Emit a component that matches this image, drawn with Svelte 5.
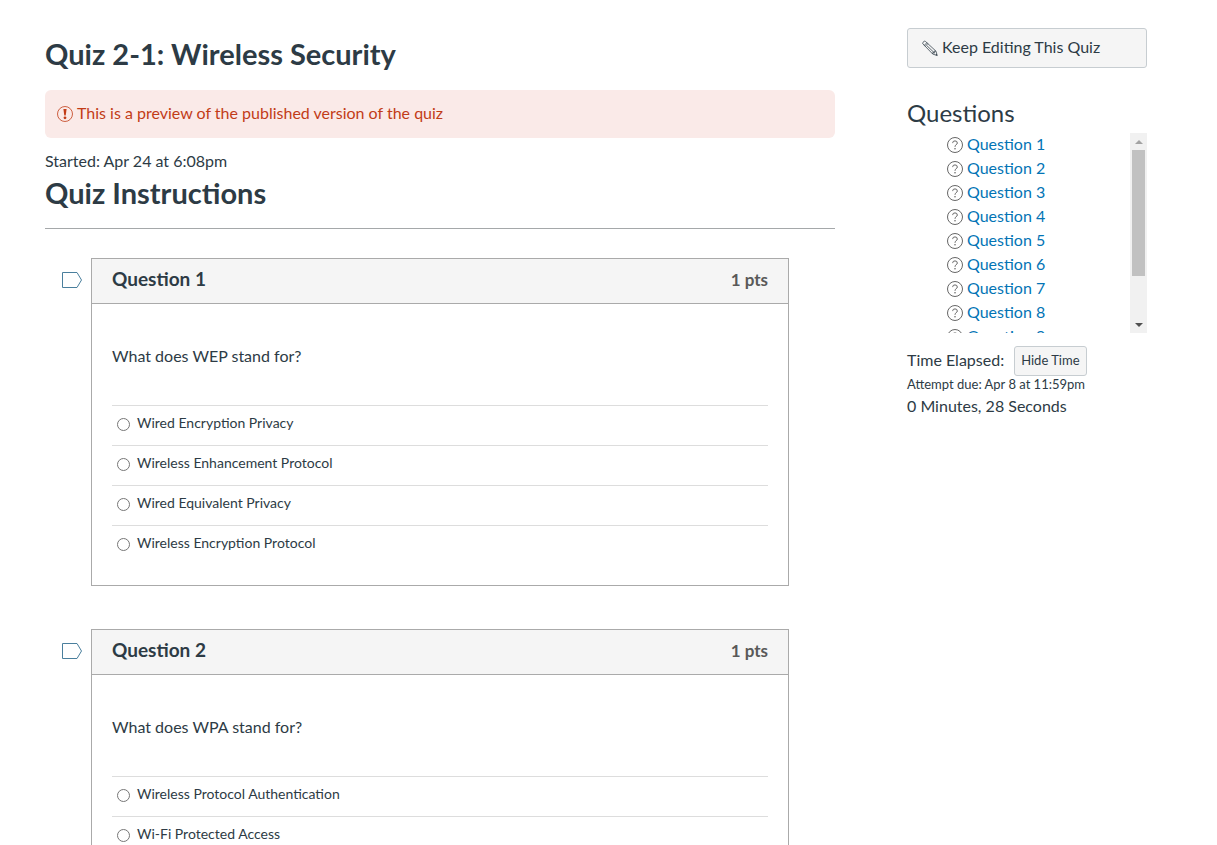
<script>
  const questions = [
    {
      id: 1,
      prompt: 'What does WEP stand for?',
      answers: [
        'Wired Encryption Privacy',
        'Wireless Enhancement Protocol',
        'Wired Equivalent Privacy',
        'Wireless Encryption Protocol'
      ]
    },
    {
      id: 2,
      prompt: 'What does WPA stand for?',
      answers: ['Wireless Protocol Authentication', 'Wi-Fi Protected Access']
    }
  ];
  const total = 10;

  let picked = $state({});
  let flagged = $state({});
  let timeShown = $state(true);
  let list = $state();
  let thumb = $state({ top: 0, height: 76 });

  function measure() {
    if (!list) return;
    thumb = {
      top: (list.scrollTop / list.scrollHeight) * 100,
      height: (list.clientHeight / list.scrollHeight) * 100
    };
  }

  function scrollList(step) {
    list.scrollTop += step;
  }

  $effect(measure);
</script>

<div class="page">
  <main>
    <h1>Quiz 2-1: Wireless Security</h1>
    <div class="alert" role="alert">
      <svg width="16" height="16" viewBox="0 0 16 16" aria-hidden="true">
        <circle cx="8" cy="8" r="7.5" fill="none" stroke="currentColor" stroke-width=".8" />
        <path d="M6.4 3h3.2L8.7 9.6H7.3z" fill="currentColor" />
        <circle cx="8" cy="11.8" r="1.4" fill="currentColor" />
      </svg>
      <span>This is a preview of the published version of the quiz</span>
    </div>
    <div class="started">Started: Apr 24 at 6:08pm</div>
    <h2>Quiz Instructions</h2>
    <hr />

    {#each questions as q (q.id)}
      <section class="question" id="question-{q.id}">
        <button
          class="flag"
          class:on={flagged[q.id]}
          aria-label="Flag question {q.id}"
          aria-pressed={!!flagged[q.id]}
          onclick={() => (flagged[q.id] = !flagged[q.id])}
        >
          <svg width="21" height="17" viewBox="0 0 21 17" aria-hidden="true">
            <path d="M.5 .5H15L19.5 8 15 15.5H.5z" stroke="#4a7f9d" />
          </svg>
        </button>
        <div class="card">
          <header>
            <h3>Question {q.id}</h3>
            <span class="points">1 pts</span>
          </header>
          <div class="body">
            <p id="prompt-{q.id}">{q.prompt}</p>
            <div role="radiogroup" aria-labelledby="prompt-{q.id}">
              {#each q.answers as answer, i}
                <label>
                  <input type="radio" name="q{q.id}" value={i} bind:group={picked[q.id]} />
                  <span>{answer}</span>
                </label>
              {/each}
            </div>
          </div>
        </div>
      </section>
    {/each}
  </main>

  <aside>
    <button class="edit">
      <svg width="16" height="17" viewBox="0 0 17 17" aria-hidden="true">
        <g fill="none" stroke="currentColor" stroke-width=".8" stroke-linejoin="round">
          <path d="M.8 3.4Q.4 2.6 1 2L2.2.9Q3 .4 3.7 1L14.8 11.3 16.2 16 11.4 14.4z" />
          <path d="M2.4 5.2L5.2 2.3M3.5 6.2L6.2 3.3M5.2 5.5L13.3 13.3M11.4 14.4V12.9L13.1 13.2 12.9 11.4 14.8 11.3" />
        </g>
        <path d="M14.3 15.4L15.6 14.1 16.2 16z" fill="currentColor" />
      </svg>
      <span>Keep Editing This Quiz</span>
    </button>

    <h2 class="side-title">Questions</h2>
    <div class="scroller">
      <ul bind:this={list} onscroll={measure}>
        {#each Array(total) as _, i}
          <li>
            <svg width="16" height="16" viewBox="0 0 16 16" aria-hidden="true">
              <g fill="none" stroke="currentColor">
                <circle cx="8" cy="8" r="7.5" />
                <path d="M5.7 6.1V5.8Q5.7 3.9 8 3.9T10.3 6Q10.3 7.1 9.2 7.7 8 8.3 8 9.8" />
              </g>
              <circle cx="8" cy="11.7" r=".8" fill="currentColor" />
            </svg>
            <a href="#question-{i + 1}">Question {i + 1}</a>
          </li>
        {/each}
      </ul>
      <div class="bar">
        <button aria-label="Scroll up" tabindex="-1" onclick={() => scrollList(-24)}>
          <svg width="8" height="4" viewBox="0 0 8 4"><path d="M0 4L4 0 8 4z" fill="#a3a3a3" /></svg>
        </button>
        <div class="track">
          <div class="thumb" style="top: {thumb.top}%; height: {thumb.height}%"></div>
        </div>
        <button aria-label="Scroll down" tabindex="-1" onclick={() => scrollList(24)}>
          <svg width="8" height="4" viewBox="0 0 8 4"><path d="M0 0H8L4 4z" fill="#505050" /></svg>
        </button>
      </div>
    </div>

    <div class="elapsed">
      <span>Time Elapsed:</span>
      <button class="hide" onclick={() => (timeShown = !timeShown)}>
        {timeShown ? 'Hide' : 'Show'} Time
      </button>
    </div>
    <div class="due">Attempt due: Apr 8 at 11:59pm</div>
    {#if timeShown}
      <div>0 Minutes, 28 Seconds</div>
    {/if}
  </aside>
</div>

<style>
  :global(body) {
    margin: 0;
    background: #fff;
  }
  .page {
    display: flex;
    align-items: flex-start;
    gap: 72px;
    padding: 28px 70px 0 45px;
    font-family: Lato, sans-serif;
    font-size: 16px;
    line-height: 24px;
    color: #2d3b45;
  }
  button {
    font: inherit;
    color: inherit;
    cursor: pointer;
  }
  main {
    flex: 1;
    min-width: 0;
  }
  h1,
  h2 {
    margin: 0;
    font-size: 29px;
    line-height: 40px;
    font-weight: 700;
  }
  h1 {
    padding: 6px 0 16px;
  }
  .alert {
    display: flex;
    align-items: flex-start;
    gap: 4px;
    padding: 11px 12px 13px;
    border-radius: 6px;
    background: #faeae8;
    color: #c23c17;
  }
  .alert svg {
    margin-top: 5px;
  }
  .started {
    margin-top: 11px;
  }
  hr {
    margin: 15px 0 29px;
    border: 0;
    border-top: 1px solid #a5a8aa;
  }
  .question {
    display: flex;
    align-items: flex-start;
    gap: 8px;
    margin: 0 46px 43px 17px;
  }
  .flag {
    display: flex;
    margin-top: 14px;
    padding: 0;
    border: 0;
    background: none;
  }
  .flag path {
    fill: none;
  }
  .flag.on path {
    fill: #f5c842;
  }
  .card {
    flex: 1;
    border: 1px solid #aaa;
  }
  header {
    display: flex;
    justify-content: space-between;
    padding: 8px 20px 12px;
    border-bottom: 1px solid #aaa;
    background: #f5f5f5;
  }
  h3,
  .points {
    margin: 0;
    font-size: 19px;
    font-weight: 700;
  }
  .points {
    padding-top: 1px;
    font-size: 17px;
    line-height: 23px;
    color: #595959;
  }
  .body {
    padding: 40px 20px 20px;
  }
  p {
    margin: 0 0 37px;
  }
  label {
    display: flex;
    align-items: flex-start;
    height: 39px;
    border-top: 1px solid #ddd;
    font-size: 14px;
  }
  label span {
    padding-top: 5px;
  }
  input {
    width: 13px;
    height: 13px;
    margin: 12px 7px 0 5px;
  }
  aside {
    width: 240px;
    flex: none;
  }
  .edit {
    display: flex;
    align-items: center;
    gap: 4px;
    width: 100%;
    padding: 6px 14px 8px;
    border: 1px solid #c7cdd1;
    border-radius: 3px;
    background: #f5f5f5;
  }
  .edit svg {
    margin-top: 2px;
  }
  .side-title {
    margin: 25px 0 0;
    font-size: 24px;
    font-weight: 400;
  }
  .scroller {
    display: flex;
    height: 200px;
  }
  ul {
    flex: 1;
    margin: 0;
    padding: 0 0 24px 40px;
    overflow-y: auto;
    scrollbar-width: none;
    list-style: none;
  }
  li {
    display: flex;
    align-items: flex-start;
    gap: 4px;
    height: 24px;
    line-height: 22px;
    color: #666;
  }
  li svg {
    margin-top: 4px;
  }
  a {
    color: #0374b5;
    text-decoration: none;
  }
  .bar {
    display: flex;
    flex-direction: column;
    width: 17px;
    background: #f1f1f1;
  }
  .bar button {
    display: flex;
    align-items: center;
    justify-content: center;
    height: 17px;
    padding: 0;
    border: 0;
    background: none;
  }
  .track {
    position: relative;
    flex: 1;
  }
  .thumb {
    position: absolute;
    left: 2px;
    right: 2px;
    background: #c1c1c1;
  }
  .elapsed {
    display: flex;
    align-items: center;
    gap: 10px;
    margin-top: 13px;
    line-height: 22px;
  }
  .elapsed span {
    padding-bottom: 2px;
  }
  .hide {
    padding: 2px 6px 4px;
    border: 1px solid #c7cdd1;
    border-radius: 3px;
    background: #f5f5f5;
    font-size: 13px;
  }
  .due {
    padding-bottom: 2px;
    font-size: 13px;
    line-height: 16px;
  }
</style>
